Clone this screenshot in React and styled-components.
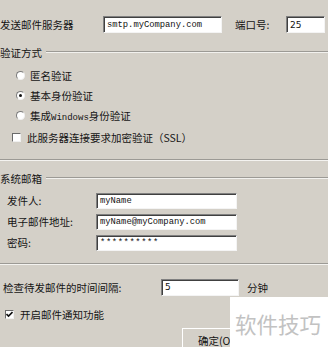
import React from 'react'
import styled, { createGlobalStyle } from 'styled-components';

const GlobalStyle = createGlobalStyle`
  html, body {
    margin: 0;
    padding: 0;
    background: #d4d0c8;
  }
`;

const Dialog = styled.div`
  position: relative;
  width: 328px;
  height: 347px;
  overflow: hidden;
  background: #d4d0c8;
  color: #141414;
  font-family: "Noto Sans CJK SC", "Noto Sans", sans-serif;
  font-size: 10.5px;
  padding-top: 14px;
  box-sizing: border-box;
`;

const Row = styled.div`
  display: flex;
  align-items: center;
  height: ${p => p.h || 20}px;
  margin-top: ${p => p.mt || 0}px;
  padding-left: ${p => p.pl || 0}px;
`;

const Label = styled.span`
  width: ${p => p.w}px;
  flex-shrink: 0;
  white-space: nowrap;
`;

const Text = styled.span`
  white-space: nowrap;
`;

const TextBox = styled.div`
  box-sizing: border-box;
  width: ${p => p.w}px;
  height: ${p => p.h || 16}px;
  margin-right: ${p => p.mr || 0}px;
  background: #fff;
  border-top: 1px solid #808080;
  border-left: 1px solid #808080;
  border-bottom: 1px solid #f4f4f4;
  border-right: 1px solid #f4f4f4;
  box-shadow: inset 1px 1px 0 #404040;
  display: flex;
  align-items: center;
  padding-left: 3px;
  font-family: ${p => p.mono ? '"Liberation Mono", monospace' : '"DejaVu Sans", sans-serif'};
  font-size: ${p => p.mono ? 8.8 : 9}px;
  letter-spacing: ${p => p.spaced ? 0.6 : 0}px;
  color: #111;
  white-space: nowrap;
  overflow: hidden;
`;

const GroupHeader = styled.div`
  display: flex;
  align-items: center;
  height: 14px;
  margin-top: ${p => p.mt}px;
  &::after {
    content: '';
    flex: 1;
    margin-left: 4px;
    border-top: 1px solid #9c9a95;
    border-bottom: 1px solid #f2f1ee;
  }
`;

const Separator = styled.div`
  margin-top: ${p => p.mt}px;
  border-top: 1px solid #9c9a95;
  border-bottom: 1px solid #f4f3f0;
`;

const Radio = styled.span`
  box-sizing: border-box;
  width: 9px;
  height: 9px;
  border-radius: 50%;
  margin-right: 5px;
  background: #fff;
  border: 1px solid;
  border-color: #7a7a7a #f0f0f0 #f0f0f0 #7a7a7a;
  position: relative;
  &::after {
    content: '';
    display: ${p => p.checked ? 'block' : 'none'};
    position: absolute;
    left: 2px;
    top: 2px;
    width: 3px;
    height: 3px;
    border-radius: 50%;
    background: #111;
  }
`;

const Check = styled.span`
  box-sizing: border-box;
  width: 9px;
  height: 9px;
  margin-right: 6px;
  background: #fff;
  border: 1px solid;
  border-color: #6a6a6a #f0f0f0 #f0f0f0 #6a6a6a;
  display: flex;
  align-items: center;
  justify-content: center;
  svg { display: block; }
`;

const Latin = styled.span`
  font-family: "Liberation Mono", monospace;
  font-size: 9px;
  vertical-align: baseline;
`;

const Button = styled.div`
  box-sizing: border-box;
  margin-top: ${p => p.mt}px;
  margin-left: 182px;
  width: 76px;
  height: 24px;
  background: #d4d0c8;
  border-top: 1px solid #fff;
  border-left: 1px solid #fff;
  border-right: 1px solid #404040;
  border-bottom: 1px solid #404040;
  display: flex;
  align-items: center;
  padding-left: 15px;
`;

const Watermark = styled.div`
  position: absolute;
  left: 230px;
  top: 297px;
  width: 98px;
  height: 50px;
  background: #fff;
  color: #c2c2c2;
  font-size: 21.5px;
  display: flex;
  align-items: center;
  padding-left: 5px;
  padding-top: 2px;
  box-sizing: border-box;
`;

const CheckMark = () => (
  <svg width="7" height="7" viewBox="0 0 7 7">
    <path d="M0.5 3 L2.5 5 L6.5 1" stroke="#111" strokeWidth="1.6" fill="none" />
  </svg>
);

export default function App() {
  return (
    <Dialog>
      <GlobalStyle />
      <Row h={21}>
        <Label w={103}>发送邮件服务器</Label>
        <TextBox w={119} h={17} mr={13} mono>smtp.myCompany.com</TextBox>
        <Label w={51}>端口号:</Label>
        <TextBox w={39} h={17}>25</TextBox>
      </Row>

      <GroupHeader mt={10}>验证方式</GroupHeader>
      <Row mt={6} pl={16}><Radio /><Text>匿名验证</Text></Row>
      <Row pl={16}><Radio checked /><Text>基本身份验证</Text></Row>
      <Row pl={16}><Radio /><Text>集成<Latin>Windows</Latin>身份验证</Text></Row>
      <Row mt={2} pl={12}><Check /><Text>此服务器连接要求加密验证（SSL）</Text></Row>

      <Separator mt={12} />

      <GroupHeader mt={10}>系统邮箱</GroupHeader>
      <Row h={21} mt={5} pl={7}>
        <Label w={89}>发件人:</Label>
        <TextBox w={141} mono>myName</TextBox>
      </Row>
      <Row h={21} pl={7}>
        <Label w={89}>电子邮件地址:</Label>
        <TextBox w={141} mono>myName@myCompany.com</TextBox>
      </Row>
      <Row h={21} pl={7}>
        <Label w={89}>密码:</Label>
        <TextBox w={141} mono spaced>**********</TextBox>
      </Row>

      <Separator mt={10} />

      <Row mt={12} pl={3}>
        <Label w={158}>检查待发邮件的时间间隔:</Label>
        <TextBox w={78} h={17} mr={8}>5</TextBox>
        <Text>分钟</Text>
      </Row>
      <Row mt={7} pl={5}><Check><CheckMark /></Check><Text>开启邮件通知功能</Text></Row>

      <Button mt={4}>确定(O)</Button>

      <Watermark>软件技巧</Watermark>
    </Dialog>
  );
}
